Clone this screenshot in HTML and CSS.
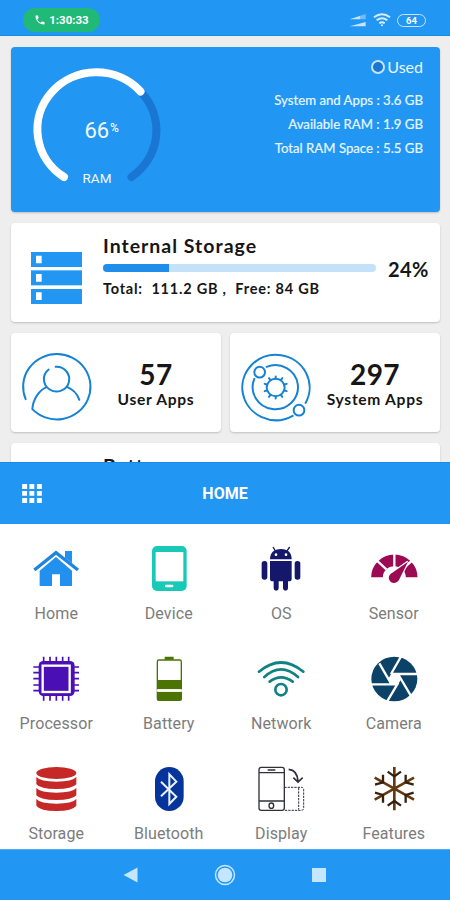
FILE: index.html
```html
<!DOCTYPE html>
<html lang="en">

<head>
  <meta charset="UTF-8">
  <meta name="viewport" content="width=device-width, initial-scale=1.0">
  <title>Device Info</title>
  <link rel="stylesheet" href="styles.css">
</head>

<body>
  <div class="screen">
    <header class="status-bar">
      <div class="call">
        <svg class="call-icon" viewBox="0 0 24 24"><path d="M6.6 10.8c1.4 2.8 3.8 5.1 6.6 6.6l2.2-2.2c.3-.3.7-.4 1-.2 1.100.4 2.300.6 3.600.6.6 0 1 .4 1 1V20c0 .6-.4 1-1 1C10.600 21 3 13.400 3 4c0-.6.4-1 1-1h3.500c.6 0 1 .4 1 1 0 1.200.2 2.400.6 3.600.1.3 0 .7-.2 1z"/></svg>
        <span>1:30:33</span>
      </div>
      <div class="status-icons">
        <svg class="signal" viewBox="0 0 54 42">
          <path d="M2 19L34 8V19ZM2 40L50 27V40Z"/>
          <path class="dim" d="M34 8L50 3V19H34Z"/>
        </svg>
        <svg class="wifi" viewBox="0 0 54 42">
          <path d="M3 13Q27 -6 51 13M11 22Q27 9 43 22M19 31Q27 25 35 31"/><circle cx="27" cy="37" r="3"/>
        </svg>
        <div class="battery-pill">64</div>
      </div>
    </header>

    <main class="content">
      <section class="card ram">
        <svg class="gauge" viewBox="0 0 130 124">
          <path class="gauge-rest" d="M107.500 22.500A59 57 0 0 1 98.500 108"/>
          <path class="gauge-used" d="M31 108A59 57 0 1 1 107.500 22.500"/>
          <text class="gauge-value" x="51.500" y="68.500">66</text>
          <text class="gauge-percent" x="77" y="62.500">%</text>
          <text class="gauge-label" x="64" y="113.500">RAM</text>
        </svg>
        <div class="ram-info">
          <div class="legend"><span class="dot"></span>Used</div>
          <p>System and Apps : 3.6 GB</p>
          <p>Available RAM : 1.9 GB</p>
          <p>Total RAM Space : 5.5 GB</p>
        </div>
      </section>

      <section class="card storage">
        <svg class="server" viewBox="0 0 153 156">
          <rect width="153" height="45"/><rect y="55" width="153" height="45"/><rect y="111" width="153" height="45"/>
          <path class="light" d="M15 11h17v23H15zM15 66h17v23H15zM15 121h17v23H15z"/>
        </svg>
        <div class="storage-info">
          <h2>Internal Storage</h2>
          <div class="bar"><div class="bar-fill" style="width: 24%"></div></div>
          <p>Total:&nbsp; 111.2 GB ,&nbsp; Free: 84 GB</p>
        </div>
        <div class="storage-percent">24%</div>
      </section>

      <div class="apps">
        <section class="card app-card">
          <svg class="app-icon" viewBox="0 0 207 200">
            <path d="M11 135A101 98 0 1 1 31 165C33 136 51 108 74 99M136 99Q162 109 172 137M101 38A38 37 0 1 1 80 46"/>
          </svg>
          <div class="app-count"><strong>57</strong><span>User Apps</span></div>
        </section>
        <section class="card app-card">
          <svg class="app-icon" viewBox="0 0 207 200">
            <path d="M194 146A101 98 0 1 0 155 185M77 38A68 66 0 1 1 40 74"/>
            <circle cx="56" cy="54" r="16"/><circle cx="174" cy="168" r="16"/>
            <ellipse cx="104" cy="100" rx="27" ry="26"/>
            <path d="M104 72V67M120 77L124 72M131 91L137 89M131 109L137 111M120 123L124 128M104 128V133M88 123L84 128M77 109L71 111M77 91L71 89M88 77L84 72"/>
          </svg>
          <div class="app-count"><strong>297</strong><span>System Apps</span></div>
        </section>
      </div>

      <section class="card battery">
        <h2>Battery</h2>
      </section>
    </main>

    <section class="sheet">
      <div class="sheet-header">
        <svg class="menu-icon" viewBox="0 0 60 58"><path d="M0 0h15v15H0zM22 0h15v15H22zM45 0h15v15H45zM0 21h15v15H0zM22 21h15v15H22zM45 21h15v15H45zM0 43h15v15H0zM22 43h15v15H22zM45 43h15v15H45z"/></svg>
        <span>HOME</span>
      </div>
      <nav class="menu">
        <a class="item">
          <svg class="home" viewBox="0 0 150 150">
            <path d="M102 21H123V58L102 41Z"/>
            <path d="M75 39L123 80V126H87V91H63V126H26V80Z"/>
            <path class="roof" d="M10 78L75 26L141 78"/>
          </svg>
          <span>Home</span>
        </a>
        <a class="item">
          <svg class="device" viewBox="0 0 150 150">
            <rect x="24" y="6" width="104" height="135" rx="15"/>
            <rect class="white" x="35" y="24" width="83" height="88"/>
            <rect class="white" x="63" y="122" width="25" height="8" rx="3"/>
          </svg>
          <span>Device</span>
        </a>
        <a class="item">
          <svg class="os" viewBox="0 0 150 150">
            <path d="M42 46C42 25 55 15 75 15S107 25 107 46Z"/>
            <path d="M42 51H107V104Q107 112 99 112H96V133Q96 140 88.500 140T81 133V112H68V133Q68 140 60.500 140T53 133V112H50Q42 112 42 104Z"/>
            <rect x="17" y="51" width="17" height="56" rx="8"/><rect x="116" y="51" width="17" height="56" rx="8"/>
            <path class="antenna" d="M51 9L59 22M101 9L92 22"/>
            <circle class="white" cx="60" cy="32" r="4"/><circle class="white" cx="90" cy="32" r="4"/>
          </svg>
          <span>OS</span>
        </a>
        <a class="item">
          <svg class="sensor" viewBox="0 0 150 150">
            <path class="dial" d="M24 100A52 51 0 0 1 128 100"/>
            <path class="gap" d="M52 76L22 48M76 70V26M100 76L136 44"/>
            <path class="needle" d="M117 53L91 106C84 121 66 120 61 108C57 98 62 90 70 86Z"/>
          </svg>
          <span>Sensor</span>
        </a>
        <a class="item">
          <svg class="processor" viewBox="0 0 150 150">
            <path class="pins" d="M38 8V140M57 8V140M76 8V140M95 8V140M113 8V140M7 39H144M7 56H144M7 74H144M7 93H144M7 110H144"/>
            <rect x="23" y="21" width="108" height="105" rx="14"/>
            <rect class="ring" x="35" y="35" width="81" height="79"/>
          </svg>
          <span>Processor</span>
        </a>
        <a class="item">
          <svg class="power" viewBox="0 0 150 150">
            <rect class="case" x="40" y="18" width="72" height="121" rx="5"/>
            <path d="M62 8H89V17H62zM40 78H112V106H40zM40 113H112V139H40z"/>
            <path class="gap" d="M38 109.500H114"/>
          </svg>
          <span>Battery</span>
        </a>
        <a class="item">
          <svg class="network" viewBox="0 0 150 150">
            <path d="M9 53Q75 -2 142 53M25 69Q75 23 126 69M41 83Q75 57 110 83"/>
            <circle cx="75" cy="107" r="17"/>
          </svg>
          <span>Network</span>
        </a>
        <a class="item">
          <svg class="camera" viewBox="0 0 150 150">
            <ellipse cx="76" cy="75" rx="69" ry="67"/>
            <path class="white" d="M66 60H87L97 76L86 92H66L57 76Z"/>
            <path class="gap" d="M31 28L68 92M146 60H66M97 6L66 60M125 124L87 60M6 91H86M54 143L88 86"/>
          </svg>
          <span>Camera</span>
        </a>
        <a class="item">
          <svg class="disks" viewBox="0 0 150 150">
            <ellipse cx="76" cy="27" rx="60" ry="18"/>
            <path d="M16 39Q28 53 76 53T136 39V61Q124 75 76 75T16 61ZM16 72Q28 86 76 86T136 72V94Q124 108 76 108T16 94ZM16 105Q28 119 76 119T136 105V125Q124 141 76 141T16 125Z"/>
          </svg>
          <span>Storage</span>
        </a>
        <a class="item">
          <svg class="bluetooth" viewBox="0 0 150 150">
            <rect x="33" y="9" width="86" height="132" rx="43"/>
            <path d="M51 53L97 98L76 120V31L97 53L51 97"/>
          </svg>
          <span>Bluetooth</span>
        </a>
        <a class="item">
          <svg class="display" viewBox="0 0 150 150">
            <rect x="9" y="10" width="76" height="129" rx="7"/>
            <path d="M9 26H85M9 111H85M35 18H58"/>
            <ellipse cx="46" cy="125" rx="7" ry="8"/>
            <path class="dashed" d="M85 70H136Q143 70 143 78V131Q143 139 136 139H85M128 72V137"/>
            <path class="arrow" d="M98 16Q124 18 126 52M112 41L126 54L140 41"/>
          </svg>
          <span>Display</span>
        </a>
        <a class="item">
          <svg class="features" viewBox="0 0 150 150">
            <path d="M76 9V139M17 41L135 107M135 41L17 107"/>
            <path class="tips" d="M56 23L76 37L96 23M56 125L76 111L96 125M42 32V55L18 62M110 32V55L134 62M42 116V93L18 86M110 116V93L134 86"/>
          </svg>
          <span>Features</span>
        </a>
      </nav>
    </section>

    <footer class="nav-bar">
      <svg viewBox="0 0 24 24"><path d="M4.500 12L18.500 4.500V19.500Z"/></svg>
      <svg viewBox="0 0 24 24"><circle class="outline" cx="12" cy="12" r="9.500"/><circle cx="12" cy="12" r="7.300"/></svg>
      <svg viewBox="0 0 24 24"><rect x="5" y="5" width="14" height="14"/></svg>
    </footer>
  </div>
</body>

</html>
```
FILE: styles.css
```css
body {
  margin: 0;
  font-family: Lato, "Liberation Sans", sans-serif;
  color: #161616;
}

h2,
p {
  margin: 0;
}

.screen {
  display: flex;
  flex-direction: column;
  width: 450px;
  height: 900px;
  overflow: hidden;
  background-color: #eeeeee;
}

/* status bar */
.status-bar {
  display: flex;
  flex: none;
  justify-content: space-between;
  box-sizing: border-box;
  height: 36px;
  padding: 8px 24px 0 23px;
  background-color: #2196f3;
  border-bottom: 1px solid #138be2;
}

.call {
  display: flex;
  align-items: center;
  justify-content: center;
  gap: 3px;
  width: 77px;
  height: 24px;
  border-radius: 12px;
  background-color: #20b978;
  color: #fff;
  font: bold 11.5px Roboto, sans-serif;
}

.call-icon {
  width: 12px;
  height: 12px;
  fill: #fff;
}

.status-icons {
  display: flex;
  align-items: center;
  gap: 6px;
  height: 24px;
}

.signal,
.wifi {
  width: 18px;
  height: 14px;
}

.signal {
  fill: #c4e4ff;
}

.wifi {
  fill: none;
  stroke: #d5ecff;
  stroke-width: 6;
}

.dim {
  opacity: 0.5;
}

.wifi circle {
  fill: #d5ecff;
  stroke: none;
}

.battery-pill {
  box-sizing: border-box;
  width: 29px;
  height: 13px;
  border: 1.5px solid #c4e4ff;
  border-radius: 7px;
  color: #fff;
  font: bold 9.5px/11px Roboto, sans-serif;
  text-align: center;
}

/* cards */
.content {
  display: flex;
  flex-direction: column;
  flex: none;
  gap: 11px;
  box-sizing: border-box;
  height: 426px;
  padding: 11px 10px 0 11px;
  overflow: hidden;
}

.card {
  box-sizing: border-box;
  flex: none;
  border-radius: 4px;
  background-color: #fff;
  box-shadow: 0 1px 2px rgba(0, 0, 0, 0.2);
}

.ram {
  display: flex;
  justify-content: space-between;
  height: 165px;
  padding: 21.5px 17px 0 21.5px;
  background-color: #2196f3;
  color: #e9f6ff;
}

.gauge {
  width: 130px;
  height: 124px;
  font-family: Roboto, sans-serif;
  overflow: visible;
}

.gauge path {
  fill: none;
  stroke-width: 8;
  stroke-linecap: round;
}

.gauge .gauge-rest {
  stroke: #1976d2;
}

.gauge .gauge-used {
  stroke: #fff;
}

.gauge text {
  fill: #f4faff;
}

.gauge-value {
  font-size: 22px;
}

.gauge-percent {
  font-size: 12px;
  font-weight: 500;
}

.gauge-label {
  font-size: 13.5px;
  text-anchor: middle;
}

.ram-info {
  margin-top: -11.5px;
  font-size: 13.2px;
  line-height: 24px;
  text-align: right;
}

.ram-info p {
  -webkit-text-stroke: 0.2px #e9f6ff;
}

.legend {
  display: flex;
  align-items: center;
  justify-content: flex-end;
  gap: 2px;
  height: 20px;
  margin-bottom: 11px;
  font-size: 16px;
}

.dot {
  box-sizing: border-box;
  width: 14px;
  height: 14px;
  border: 2px solid #c4e4ff;
  border-radius: 50%;
  background-color: #1976d2;
}

.storage {
  display: flex;
  height: 99px;
  padding: 11px 11px 0 20px;
}

.server {
  width: 51px;
  height: 52px;
  margin: 18px 21px 0 0;
  fill: #2196f3;
}

.server .light {
  fill: #fff;
}

.storage-info {
  width: 273px;
}

h2 {
  font-size: 19.5px;
  line-height: 23px;
  letter-spacing: 1px;
}

.bar {
  height: 8px;
  margin: 7px 0 8px;
  border-radius: 4px;
  background-color: #c5e1fa;
  overflow: hidden;
}

.bar-fill {
  height: 100%;
  background-color: #1e8eea;
}

.storage-info p {
  font-size: 14.5px;
  font-weight: bold;
  line-height: 18px;
  letter-spacing: 0.77px;
  white-space: nowrap;
}

.storage-percent {
  flex: 1;
  margin-top: 23px;
  font-size: 20px;
  font-weight: bold;
  line-height: 24px;
  letter-spacing: 0.5px;
  text-align: right;
}

.apps {
  display: grid;
  grid-template-columns: 1fr 1fr;
  gap: 9px;
}

.app-card {
  display: flex;
  height: 99px;
  padding: 21px 0 0 11px;
}

.app-icon {
  flex: none;
  width: 69px;
  height: 67px;
  fill: none;
  stroke: #1583d3;
  stroke-width: 6;
  stroke-linecap: round;
  overflow: visible;
}

.app-count {
  display: flex;
  flex: 1;
  flex-direction: column;
  align-items: center;
  padding-top: 4px;
}

.app-count strong {
  font-size: 28px;
  line-height: 32px;
  letter-spacing: 0.4px;
}

.app-count span {
  font-size: 15.6px;
  font-weight: bold;
  line-height: 18px;
  letter-spacing: 0.7px;
}

.battery {
  height: 99px;
  padding: 11px 0 0 92px;
}

/* bottom sheet */
.sheet {
  flex: none;
  height: 387px;
  background-color: #fff;
}

.sheet-header {
  display: grid;
  grid-template-columns: 1fr auto 1fr;
  align-items: center;
  box-sizing: border-box;
  height: 62px;
  padding: 0 22px;
  border-top: 1px solid #168be5;
  background-color: #2196f3;
  color: #fff;
  font: bold 16px Roboto, sans-serif;
}

.menu-icon {
  width: 20px;
  height: 19px;
  fill: #fff;
}

.menu {
  display: grid;
  grid-template-columns: repeat(4, 1fr);
  grid-auto-rows: 110px;
  padding-top: 20px;
}

.item {
  display: flex;
  flex-direction: column;
  align-items: center;
  color: #7c7c7c;
  font: 16px/20px Roboto, sans-serif;
  letter-spacing: 0.1px;
}

.item svg {
  width: 50px;
  height: 50px;
  margin-bottom: 10px;
}

.item .white {
  fill: #fff;
  stroke: none;
}

.item .gap {
  fill: none;
  stroke: #fff;
  stroke-width: 7;
}

.home {
  fill: #2190ee;
}

.roof {
  fill: none;
  stroke: #1e86df;
  stroke-width: 10;
}

.device {
  fill: #19c9b7;
}

.os {
  fill: #15176a;
}

.antenna {
  stroke: #15176a;
  stroke-width: 4;
}

.dial {
  fill: none;
  stroke: #9b0a53;
  stroke-width: 35;
}

.needle {
  fill: #9b0a53;
  stroke: #fff;
  stroke-width: 7;
  paint-order: stroke;
}

.processor {
  fill: #4a10b5;
}

.pins {
  stroke: #4a10b5;
  stroke-width: 5;
}

.ring {
  stroke: #fff;
  stroke-width: 7;
}

.power {
  fill: #4b7404;
}

.case {
  fill: #fff;
  stroke: #4b7404;
  stroke-width: 4;
}

.network {
  fill: none;
  stroke: #0f8383;
  stroke-width: 8;
  stroke-linecap: round;
}

.camera {
  fill: #0c4168;
}

.disks {
  fill: #c62828;
}

.bluetooth {
  fill: #05359a;
}

.bluetooth path {
  fill: none;
  stroke: #eaf2ff;
  stroke-width: 6;
}

.display {
  fill: none;
  stroke: #30303c;
  stroke-width: 4;
}

.dashed {
  stroke-width: 3;
  stroke-dasharray: 7 3;
}

.arrow {
  stroke-width: 5;
}

.features {
  fill: none;
  stroke: #65380f;
  stroke-width: 8;
}

.tips {
  stroke: #38200c;
  stroke-width: 7;
}

/* system navigation */
.nav-bar {
  display: flex;
  flex: none;
  justify-content: center;
  gap: 70px;
  box-sizing: border-box;
  height: 51px;
  padding-top: 13px;
  border-top: 1px solid #55aef5;
  background-color: #2196f3;
}

.nav-bar svg {
  width: 24px;
  height: 24px;
  fill: #c4e6ff;
}

.nav-bar .outline {
  fill: none;
  stroke: #c4e6ff;
  stroke-width: 1.5;
}
```
